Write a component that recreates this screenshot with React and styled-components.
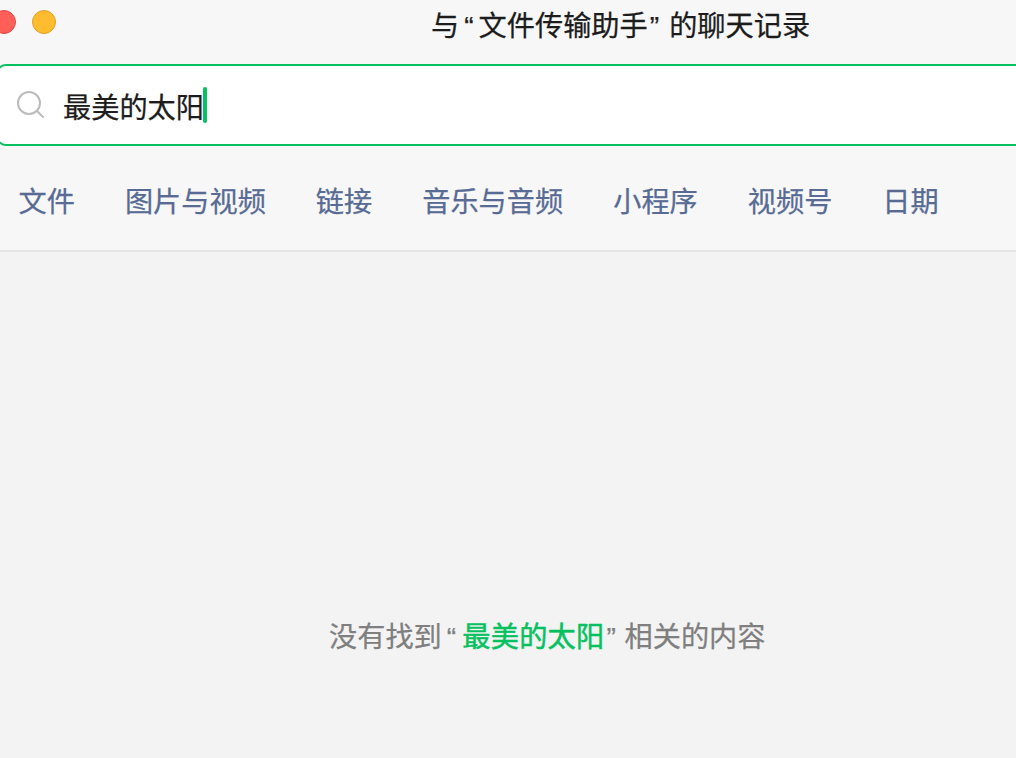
import React from 'react';
import styled, { createGlobalStyle } from 'styled-components';

const GlobalStyle = createGlobalStyle`
  html, body {
    margin: 0;
    padding: 0;
    height: 100%;
    overflow: hidden;
  }
  body {
    font-family: "Liberation Sans", "Noto Sans CJK SC", sans-serif;
    -webkit-text-stroke: 0.25px currentColor;
  }
`;

const Page = styled.div`
  width: 1016px;
  height: 758px;
  display: flex;
  flex-direction: column;
  overflow: hidden;
  background-color: #f3f3f3;
`;

const Header = styled.div`
  height: 252px;
  flex: none;
  box-sizing: border-box;
  background-color: #f7f7f7;
  border-bottom: 2px solid #e5e5e5;
  display: flex;
  flex-direction: column;
`;

const TitleBar = styled.div`
  height: 64px;
  flex: none;
  display: flex;
  align-items: flex-start;
`;

const Lights = styled.div`
  display: flex;
  gap: 16px;
  margin: 10px 0 0 -8px;
  width: 439px;
  flex: none;
`;

const Light = styled.span`
  width: 22px;
  height: 22px;
  border-radius: 50%;
  background-color: ${(props) => props.color};
  border: 1px solid ${(props) => props.edge};
`;

const Title = styled.div`
  font-size: 28.2px;
  line-height: 32px;
  margin-top: 10px;
  color: #1c1c1c;
  white-space: nowrap;
`;

const OpenQuote = styled.span`
  margin: 0 5px 0 5px;
`;

const CloseQuote = styled.span`
  margin: 0 ${(props) => props.after || '10px'} 0 2px;
`;

const SearchBox = styled.div`
  height: 82px;
  flex: none;
  box-sizing: border-box;
  margin: 0 -20px 0 -4px;
  border: 2px solid #07c160;
  border-radius: 10px;
  background-color: #fff;
  display: flex;
  align-items: center;
  padding-left: 19px;
`;

const SearchIcon = styled.svg`
  width: 27px;
  height: 27px;
  flex: none;
  margin: -1px 19px 0 0;
`;

const SearchText = styled.span`
  font-size: 28.2px;
  line-height: 32px;
  color: #1c1c1c;
  margin-top: 5px;
`;

const Caret = styled.span`
  width: 4px;
  height: 36px;
  border-radius: 2px;
  background-color: #07c160;
  margin-left: -1px;
`;

const Tabs = styled.div`
  display: flex;
  gap: 50px;
  padding: 40px 0 0 18.5px;
`;

const Tab = styled.span`
  font-size: 28.2px;
  line-height: 32px;
  color: #576b95;
  white-space: nowrap;
`;

const Body = styled.div`
  flex: 1;
  display: flex;
  flex-direction: column;
  align-items: flex-start;
`;

const EmptyText = styled.div`
  margin: 369px 0 0 329px;
  font-size: 28.2px;
  line-height: 32px;
  color: #7f7f7f;
  white-space: nowrap;
`;

const Keyword = styled.span`
  color: #07c160;
  margin-left: 1px;
  letter-spacing: 0.3px;
  -webkit-text-stroke: 0.5px currentColor;
`;

const tabs = ['文件', '图片与视频', '链接', '音乐与音频', '小程序', '视频号', '日期'];

const App = () => (
  <Page>
    <GlobalStyle />
    <Header>
      <TitleBar>
        <Lights>
          <Light color="#ff5f57" edge="#e5484a" />
          <Light color="#febc2e" edge="#e0a028" />
        </Lights>
        <Title>
          与<OpenQuote>“</OpenQuote>文件传输助手<CloseQuote>”</CloseQuote>的聊天记录
        </Title>
      </TitleBar>
      <SearchBox>
        <SearchIcon viewBox="0 0 27 27" fill="none" stroke="#bbbbbb" strokeWidth="2">
          <circle cx="12" cy="12" r="11" />
          <path d="M20 20l6 6" strokeLinecap="round" />
        </SearchIcon>
        <SearchText>最美的太阳</SearchText>
        <Caret />
      </SearchBox>
      <Tabs>
        {tabs.map((t) => (
          <Tab key={t}>{t}</Tab>
        ))}
      </Tabs>
    </Header>
    <Body>
      <EmptyText>
        没有找到<OpenQuote>“</OpenQuote>
        <Keyword>最美的太阳</Keyword>
        <CloseQuote after="8.5px">”</CloseQuote>相关的内容
      </EmptyText>
    </Body>
  </Page>
);

export default App;
